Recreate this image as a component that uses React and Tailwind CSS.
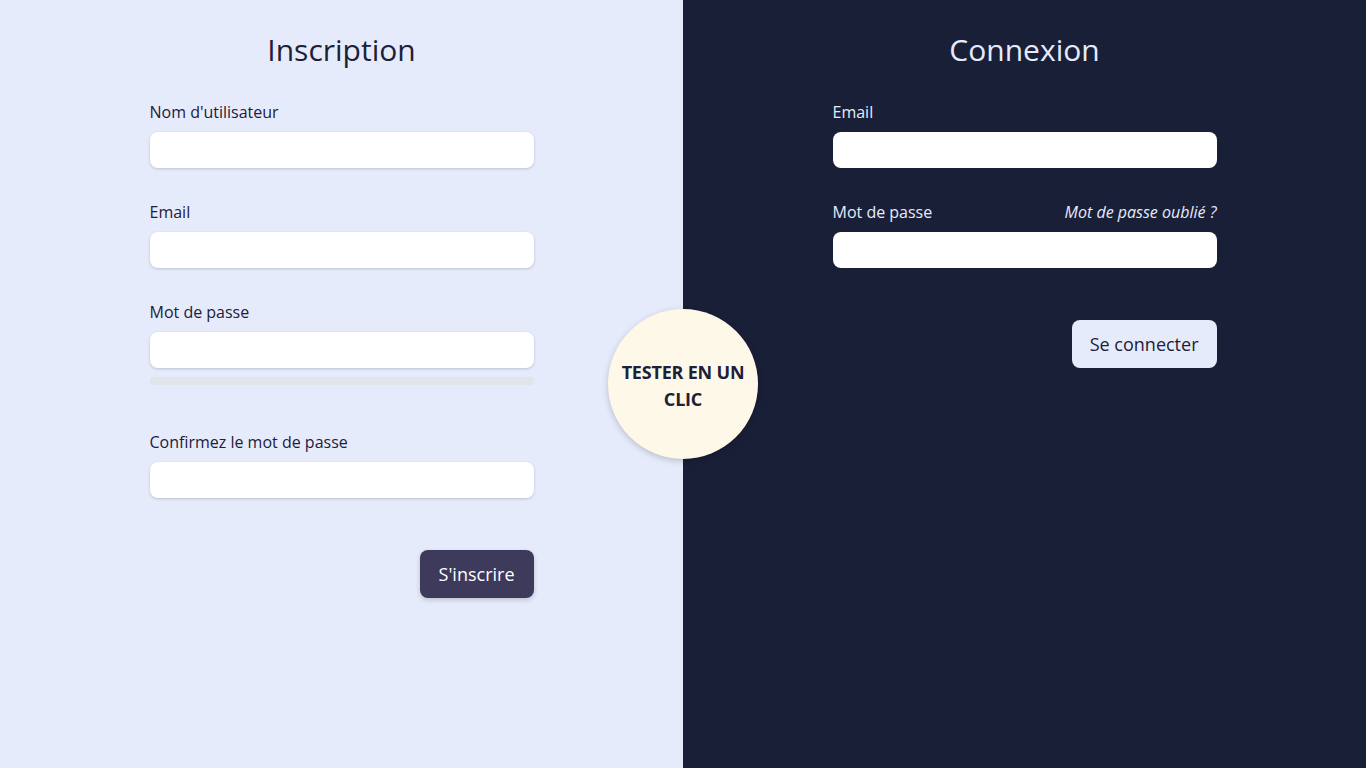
import { useState } from "react";

const font = { fontFamily: '"Open Sans", "Noto Sans", sans-serif' };

const Field = ({ label, type = "text", dark, right, children }) => (
  <div className="mb-8">
    <div className="flex items-center justify-between h-6 mb-2">
      <label className={`text-base ${dark ? "text-[#e6ebfc]" : "text-[#1c2039]"}`}>{label}</label>
      {right}
    </div>
    <input
      type={type}
      className={`w-full h-9 rounded-lg bg-white px-3 outline-none text-[#1c2039] ${dark ? "" : "shadow-[0_1px_3px_rgba(0,0,0,0.18)]"}`}
    />
    {children}
  </div>
);

export default function App() {
  const [pwd] = useState("");

  return (
    <div className="relative flex w-full h-[768px] overflow-hidden" style={font}>
      <section className="w-1/2 h-full bg-[#e6ebfc] flex justify-center pt-8">
        <form className="w-96">
          <h1 className="text-[30px] leading-9 text-center text-[#1c2039] mb-8">Inscription</h1>
          <Field label="Nom d'utilisateur" />
          <Field label="Email" type="email" />
          <Field label="Mot de passe" type="password">
            <div className="mt-[9px] h-2 rounded-full bg-[#e2e4ec]" data-strength={pwd.length} />
          </Field>
          <div className="mt-[45px]">
            <Field label="Confirmez le mot de passe" type="password" />
          </div>
          <div className="flex justify-end pt-5">
            <button type="button" className="h-12 px-[19px] rounded-lg bg-[#3d3a5c] text-white text-lg shadow-[0_2px_5px_rgba(0,0,0,0.18)]">
              S'inscrire
            </button>
          </div>
        </form>
      </section>

      <section className="w-1/2 h-full bg-[#1a1f38] flex justify-center pt-8">
        <form className="w-96">
          <h1 className="text-[30px] leading-9 text-center text-[#e6ebfc] mb-8">Connexion</h1>
          <Field label="Email" type="email" dark />
          <Field
            label="Mot de passe"
            type="password"
            dark
            right={<a className="text-base italic text-[#e6ebfc] cursor-pointer">Mot de passe oublié ?</a>}
          />
          <div className="flex justify-end pt-5">
            <button type="button" className="h-12 px-[18px] rounded-lg bg-[#e6ebfc] text-[#1c2039] text-lg">
              Se connecter
            </button>
          </div>
        </form>
      </section>

      <button
        type="button"
        className="absolute left-[608px] top-[309px] w-[150px] h-[150px] rounded-full bg-[#fef8e8] text-[#1c2039] font-bold text-lg leading-[27px] uppercase px-3 pt-1 tracking-[-0.2px] shadow-[0_2px_6px_rgba(0,0,0,0.2)]"
      >
        Tester en un clic
      </button>
    </div>
  );
}
